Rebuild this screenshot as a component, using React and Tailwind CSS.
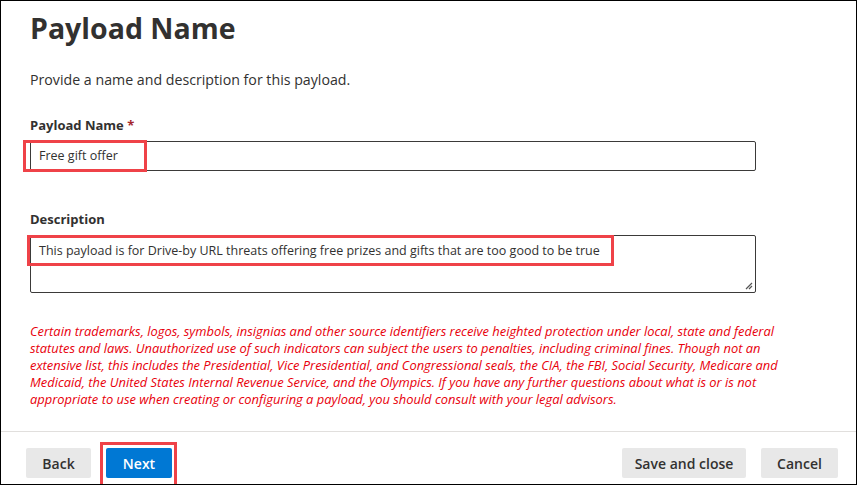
const FONT = { fontFamily: "'Open Sans', 'Noto Sans', sans-serif" };

// ── Red annotation box (overlay) ─────────────────────────────────────────────
const Mark = ({ className }) => (
  <div className={`absolute border-[3px] border-[#ef4248] pointer-events-none ${className}`} />
);

const Button = ({ children, primary = false, className = "" }) => (
  <button
    className={[
      "h-[30px] rounded-[2px] text-[14px] font-semibold",
      primary ? "bg-[#0078d4] text-white" : "bg-[#e8e8e8] text-[#323130]",
      className,
    ].join(" ")}
  >
    {children}
  </button>
);

export default function App() {
  return (
    <div
      className="w-[857px] h-[485px] bg-white border border-black flex flex-col overflow-hidden text-[#323130]"
      style={FONT}
    >
      {/* ── Body ── */}
      <div className="flex-1 pl-[29px] pr-[100px]">
        <h1 className="mt-[9px] text-[28.5px] leading-[36px] font-bold">
          Payload Name
        </h1>

        <p className="mt-[24px] text-[14.2px] leading-[20px]">
          Provide a name and description for this payload.
        </p>

        {/* Name field */}
        <div className="relative mt-[25px]">
          <label className="block text-[13px] leading-[20px] font-bold">
            Payload Name <span className="text-[#a4262c]">*</span>
          </label>
          <div className="mt-[6px] h-[30px] border border-[#3b3a39] rounded-[2px] flex items-center pl-[8px] text-[12.5px]">
            Free gift offer
          </div>
          <Mark className="left-[-7px] top-[25px] w-[124px] h-[32px]" />
        </div>

        {/* Description field */}
        <div className="relative mt-[38px]">
          <label className="block text-[13px] leading-[20px] font-bold">Description</label>
          <div className="relative mt-[6px] h-[58px] border border-[#3b3a39] rounded-[2px] pl-[8px] pt-[5px] text-[12.5px] leading-[20px]">
            This payload is for Drive-by URL threats offering free prizes and gifts that are too good to be true
            <svg className="absolute right-[2px] bottom-[2px]" width="8" height="8" viewBox="0 0 8 8">
              <path d="M7 1L1 7M7 4L4 7" stroke="#555" strokeWidth="1.2" />
            </svg>
          </div>
          <Mark className="left-[-3px] top-[26px] w-[587px] h-[31px]" />
        </div>

        {/* Legal note */}
        <p className="mt-[30px] text-[12.9px] leading-[17px] italic text-[#e8000b] whitespace-nowrap">
          Certain trademarks, logos, symbols, insignias and other source identifiers receive heighted protection under local, state and federal
          <br />
          statutes and laws. Unauthorized use of such indicators can subject the users to penalties, including criminal fines. Though not an
          <br />
          extensive list, this includes the Presidential, Vice Presidential, and Congressional seals, the CIA, the FBI, Social Security, Medicare and
          <br />
          Medicaid, the United States Internal Revenue Service, and the Olympics. If you have any further questions about what is or is not
          <br />
          appropriate to use when creating or configuring a payload, you should consult with your legal advisors.
        </p>
      </div>

      {/* ── Footer ── */}
      <div className="h-[53px] border-t border-[#e1dfdd] flex items-start pt-[16px] pl-[25px] pr-[18px]">
        <Button className="w-[65px]">Back</Button>
        <div className="relative ml-[15px]">
          <Button primary className="w-[66px]">Next</Button>
          <Mark className="left-[-6px] top-[-6px] w-[77px] h-[46px]" />
        </div>
        <div className="flex-1" />
        <Button className="w-[124px]">Save and close</Button>
        <Button className="w-[77px] ml-[15px]">Cancel</Button>
      </div>
    </div>
  );
}
